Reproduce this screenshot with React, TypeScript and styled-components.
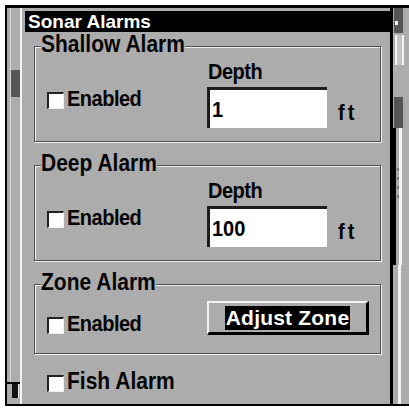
import React from "react";
import styled, { createGlobalStyle } from "styled-components";

const GRAY = "#acacac";
const DARK = "#555555";
const FONT = `"Liberation Sans", Arial, sans-serif`;

const Global = createGlobalStyle`
  html, body { margin: 0; padding: 0; background: #ffffff; }
  body { width: 409px; height: 409px; overflow: hidden; font-family: ${FONT}; }
`;

const Screen = styled.div`
  display: flex;
  margin: 5px 0 0 5px;
  width: 402px;
  height: 396px;
  border-top: 3px solid #000;
  border-left: 2px solid #000;
  border-bottom: 2px solid #000;
  background: ${GRAY};
`;

/* tall bitmap-like lettering */
const Tall = styled.span`
  display: inline-block;
  transform: scaleY(1.12);
  transform-origin: 50% 85%;
`;

/* ---------- left scroll strip ---------- */
const LeftBar = styled.div`
  width: 13px;
  display: flex;
  flex-direction: column;
  border-right: 2px solid #f4f4f4;
`;
const LeftTrack = styled.div`
  flex: 1;
  margin-left: 3px;
  border-left: 1px solid #d6d6d6;
`;
const LeftThumb = styled.div`
  width: 9px;
  height: 27px;
  margin-top: 62px;
  background: ${DARK};
`;
const LeftCap = styled.div`
  height: 20px;
  border-top: 2px solid #000;
  display: flex;
`;
const LeftCapBlock = styled.div`
  width: 6px;
  height: 14px;
  margin-left: 5px;
  background: #111;
  border-right: 1px solid #eee;
`;

/* ---------- main ---------- */
const Main = styled.div`
  flex: 1;
  display: flex;
  flex-direction: column;
  padding: 3px 0 0 3px;
`;
const TitleBar = styled.div`
  height: 21px;
  width: 365px;
  background: #000;
  color: #fff;
  font-weight: bold;
  font-size: 19px;
  line-height: 21px;
  padding-left: 3px;
  box-sizing: border-box;
  white-space: nowrap;
`;
const Groups = styled.div`
  display: flex;
  flex-direction: column;
  padding-left: 9px;
`;
const Group = styled.fieldset<{ $top: number; $pb: number }>`
  margin: ${(p) => p.$top}px 0 0 0;
  padding: 0 0 ${(p) => p.$pb}px 0;
  width: 345px;
  min-inline-size: 0;
  border: 1px solid #4e4e4e;
  box-shadow: inset 1px 1px 0 #f4f4f4, 1px 1px 0 #f4f4f4;
`;
const Legend = styled.legend`
  margin-left: 6px;
  padding: 0 0 3px 0;
  background: ${GRAY};
  font-weight: bold;
  font-size: 21px;
  line-height: 20px;
  color: #050505;
  white-space: nowrap;
`;
const GroupBody = styled.div`
  display: flex;
  align-items: flex-start;
  padding-left: 12px;
`;
const LeftCol = styled.div<{ $top: number }>`
  width: 160px;
  margin-top: ${(p) => p.$top}px;
`;
const CheckRow = styled.div<{ $size?: number }>`
  display: flex;
  align-items: flex-end;
  gap: 3px;
  font-weight: bold;
  font-size: ${(p) => p.$size ?? 20}px;
  letter-spacing: ${(p) => (p.$size ? 0 : -0.5)}px;
  line-height: 20px;
  color: #050505;
  white-space: nowrap;
`;
const Box = styled.div`
  width: 17px;
  height: 17px;
  box-sizing: border-box;
  flex: none;
  background: #fff;
  border-top: 2px solid #222;
  border-left: 2px solid #222;
  border-right: 1px solid #f0f0f0;
  border-bottom: 1px solid #f0f0f0;
`;
const RightCol = styled.div`
  display: flex;
  flex-direction: column;
  padding-top: 4px;
`;
const FieldLabel = styled.div`
  font-weight: bold;
  font-size: 20px;
  letter-spacing: -0.5px;
  line-height: 20px;
  padding-left: 1px;
  color: #050505;
`;
const InputRow = styled.div`
  display: flex;
  margin-top: 5px;
`;
const Field = styled.div`
  width: 120px;
  height: 41px;
  box-sizing: border-box;
  background: #fff;
  border-top: 3px solid #1c1c1c;
  border-left: 3px solid #1c1c1c;
  padding: 10px 0 0 2px;
  font-weight: bold;
  font-size: 20px;
  line-height: 20px;
  color: #000;
`;
const Unit = styled.div`
  align-self: flex-end;
  margin: 0 0 5px 11px;
  font-weight: bold;
  font-size: 20px;
  line-height: 20px;
  letter-spacing: 3px;
  color: #050505;
`;
const Button = styled.div`
  margin-top: 5px;
  width: 162px;
  height: 34px;
  box-sizing: border-box;
  border-top: 2px solid #f4f4f4;
  border-left: 2px solid #f4f4f4;
  border-right: 3px solid #000;
  border-bottom: 3px solid #000;
  display: flex;
  align-items: center;
  justify-content: center;
`;
const Highlight = styled.span`
  background: #000;
  color: #fff;
  font-weight: bold;
  font-size: 21px;
  letter-spacing: 0.2px;
  line-height: 24px;
  padding: 0 1px;
  white-space: nowrap;
`;
const FishRow = styled.div`
  margin: 18px 0 0 22px;
`;

/* ---------- right scroll strip ---------- */
const RightBar = styled.div`
  width: 17px;
  display: flex;
  flex-direction: column;
  border-left: 3px solid #000;
`;
const RSeg = styled.div<{ $h: number }>`
  height: ${(p) => p.$h}px;
  display: flex;
  flex: none;
`;
const RDark = styled.div<{ $h: number }>`
  width: 9px;
  height: ${(p) => p.$h}px;
  margin-left: 1px;
  background: ${DARK};
`;
const RDot = styled.div`
  width: 3px;
  height: 4px;
  margin: 13px 0 0 1px;
  background: #f4f4f4;
`;
const RFrame = styled.div`
  width: 5px;
  height: 30px;
  margin: 2px 0 0 2px;
  background: #c4c4c4;
  border-left: 2px solid #f4f4f4;
  border-right: 2px solid #f4f4f4;
`;
const RTrackBlack = styled.div`
  width: 3px;
  background: #000;
`;
const RTrackGap = styled.div`
  width: 3px;
  display: flex;
  flex-direction: column;
  align-items: center;
  padding-top: 40px;
  gap: 6px;
`;
const RDots = styled.div`
  width: 2px;
  height: 3px;
  background: #777;
`;
const RWhite = styled.div<{ $ml: number }>`
  width: 3px;
  margin-left: ${(p) => p.$ml}px;
  background: #f4f4f4;
`;

function Check({ label, size }: { label: string; size?: number }) {
  return (
    <CheckRow $size={size}>
      <Box />
      <Tall>{label}</Tall>
    </CheckRow>
  );
}

function DepthGroup({ title, value, top }: { title: string; value: string; top: number }) {
  return (
    <Group $top={top} $pb={13}>
      <Legend>
        <Tall>{title}</Tall>
      </Legend>
      <GroupBody>
        <LeftCol $top={31}>
          <Check label="Enabled" />
        </LeftCol>
        <RightCol>
          <FieldLabel>
            <Tall>Depth</Tall>
          </FieldLabel>
          <InputRow>
            <Field>
              <Tall>{value}</Tall>
            </Field>
            <Unit>
              <Tall>ft</Tall>
            </Unit>
          </InputRow>
        </RightCol>
      </GroupBody>
    </Group>
  );
}

export default function App() {
  return (
    <>
      <Global />
      <Screen>
        <LeftBar>
          <LeftTrack>
            <LeftThumb />
          </LeftTrack>
          <LeftCap>
            <LeftCapBlock />
          </LeftCap>
        </LeftBar>
        <Main>
          <TitleBar>Sonar Alarms</TitleBar>
          <Groups>
            <DepthGroup title="Shallow Alarm" value="1" top={3} />
            <DepthGroup title="Deep Alarm" value="100" top={12} />
            <Group $top={12} $pb={18}>
              <Legend>
                <Tall>Zone Alarm</Tall>
              </Legend>
              <GroupBody>
                <LeftCol $top={18}>
                  <Check label="Enabled" />
                </LeftCol>
                <Button>
                  <Highlight>Adjust Zone</Highlight>
                </Button>
              </GroupBody>
            </Group>
          </Groups>
          <FishRow>
            <Check label="Fish Alarm" size={21} />
          </FishRow>
        </Main>
        <RightBar>
          <RSeg $h={25}>
            <RDark $h={25}>
              <RDot />
            </RDark>
          </RSeg>
          <RSeg $h={32}>
            <RFrame />
          </RSeg>
          <RSeg $h={32} />
          <RSeg $h={31}>
            <RDark $h={31} />
          </RSeg>
          <RSeg $h={137}>
            <RTrackBlack />
            <RTrackGap>
              <RDots />
              <RDots />
              <RDots />
              <RDots />
            </RTrackGap>
            <RWhite $ml={0} />
          </RSeg>
          <RSeg $h={139}>
            <RWhite $ml={5} />
          </RSeg>
        </RightBar>
      </Screen>
    </>
  );
}
